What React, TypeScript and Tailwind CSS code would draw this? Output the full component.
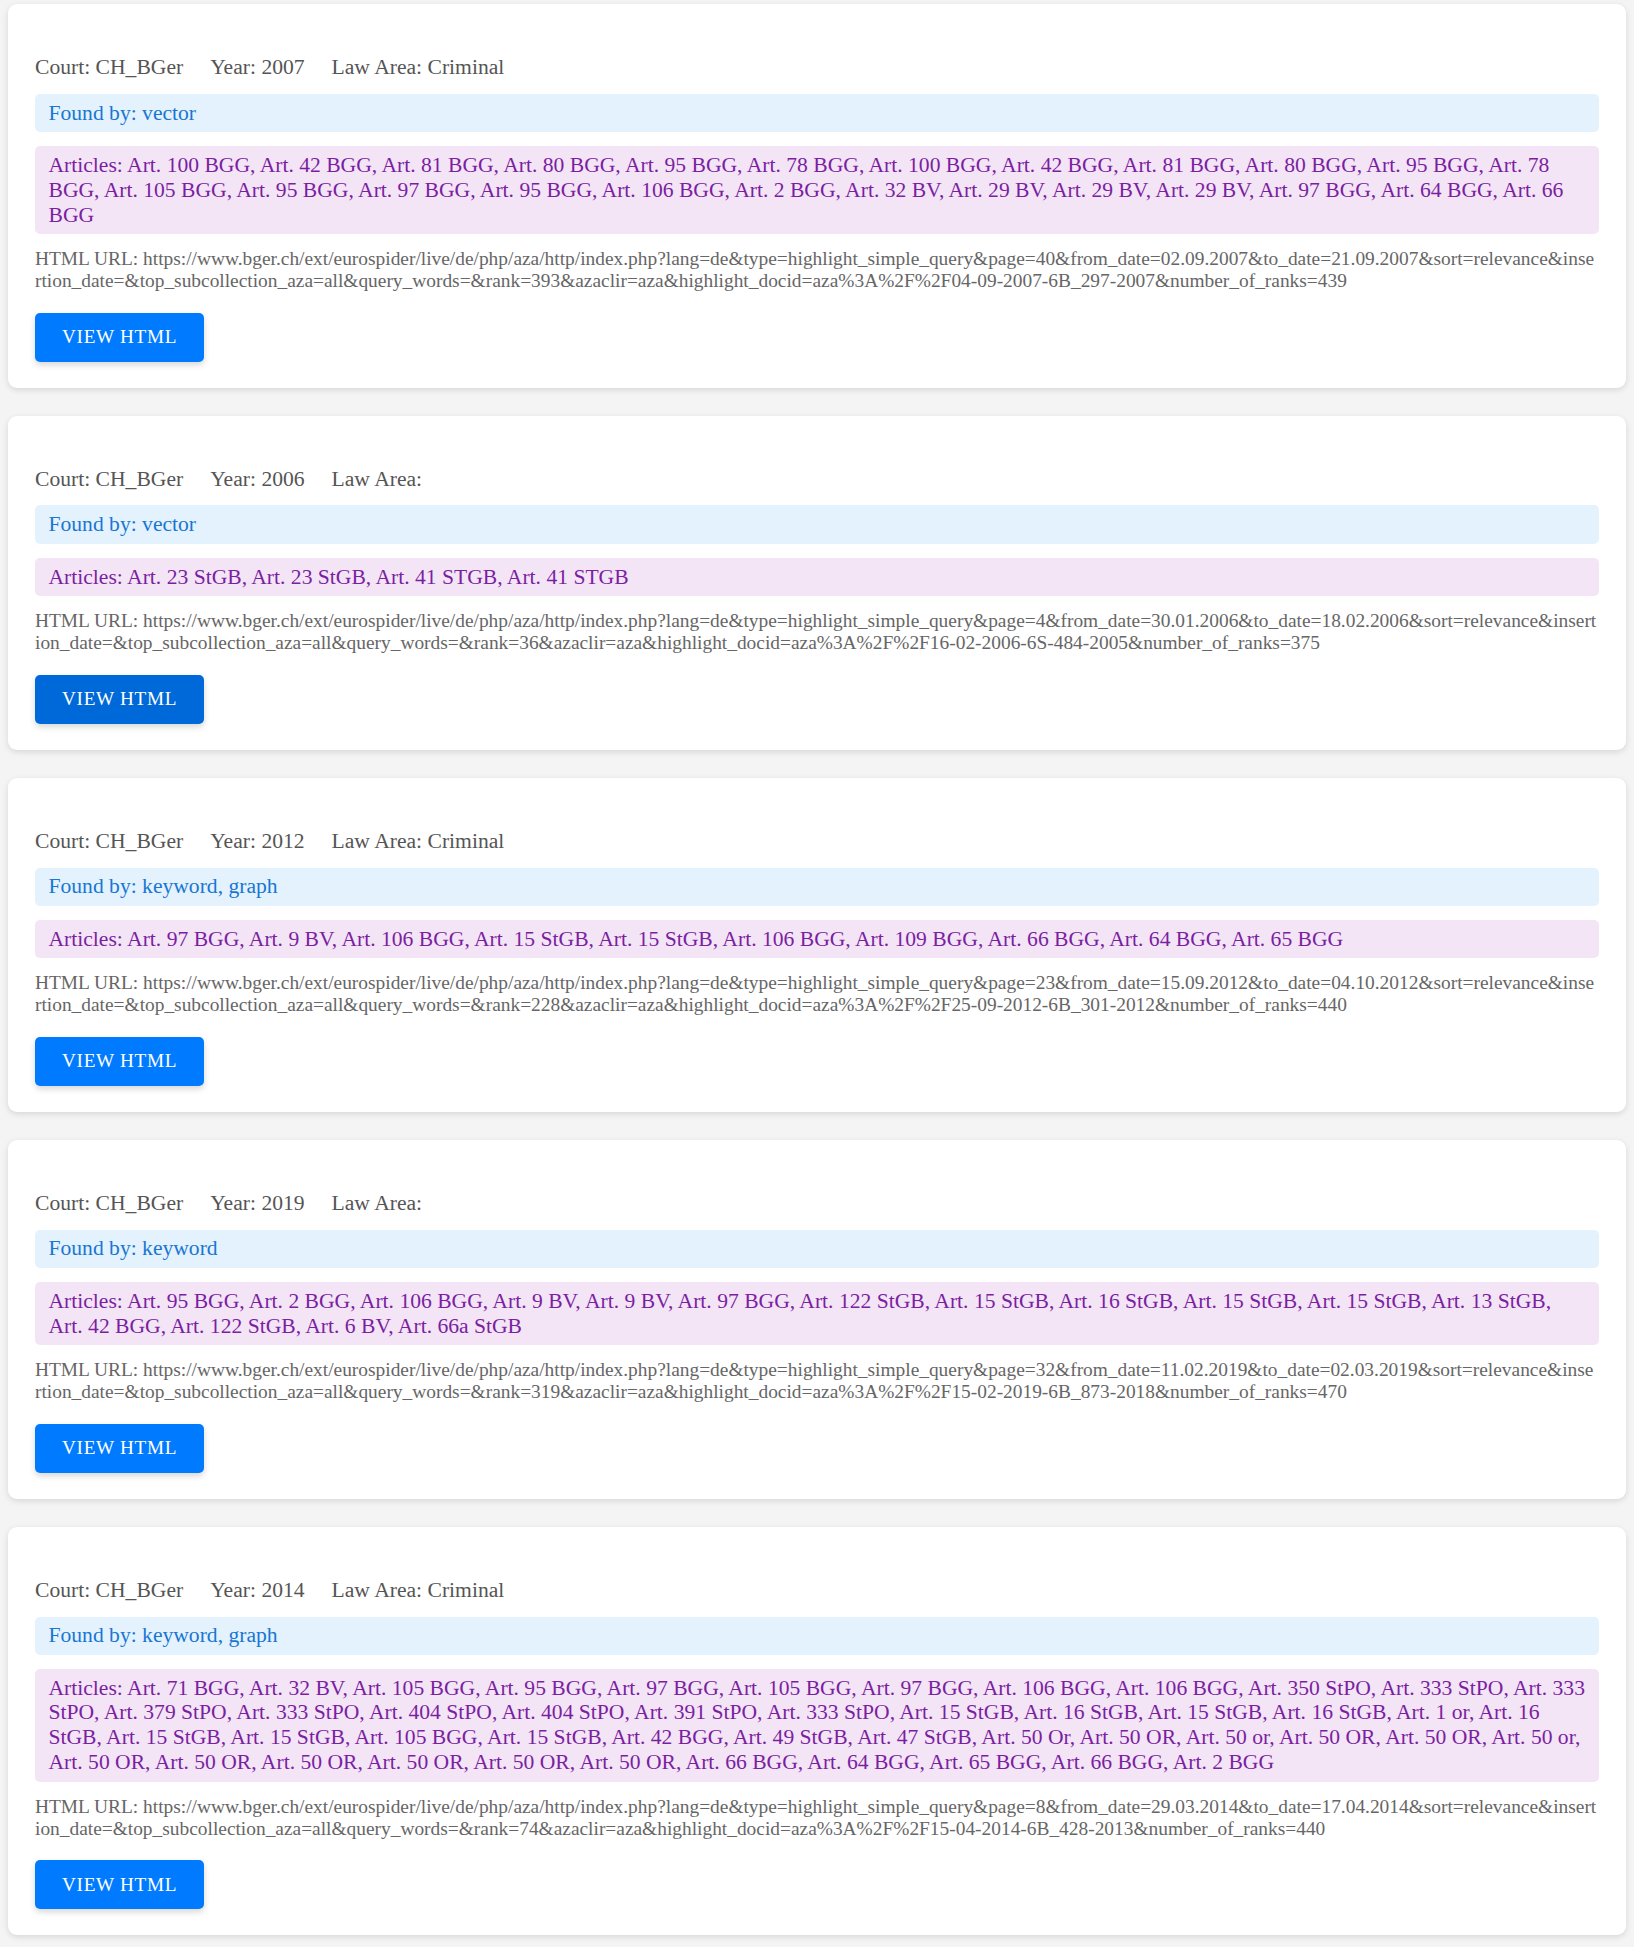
const base =
  'https://www.bger.ch/ext/eurospider/live/de/php/aza/http/index.php?lang=de&type=highlight_simple_query'

interface Decision {
  court: string
  year: number
  lawArea: string
  foundBy: string
  articles: string
  url: string
}

const decisions: Decision[] = [
  {
    court: 'CH_BGer',
    year: 2007,
    lawArea: 'Criminal',
    foundBy: 'vector',
    articles:
      'Art. 100 BGG, Art. 42 BGG, Art. 81 BGG, Art. 80 BGG, Art. 95 BGG, Art. 78 BGG, Art. 100 BGG, Art. 42 BGG, Art. 81 BGG, Art. 80 BGG, Art. 95 BGG, Art. 78 BGG, Art. 105 BGG, Art. 95 BGG, Art. 97 BGG, Art. 95 BGG, Art. 106 BGG, Art. 2 BGG, Art. 32 BV, Art. 29 BV, Art. 29 BV, Art. 29 BV, Art. 97 BGG, Art. 64 BGG, Art. 66 BGG',
    url:
      base +
      '&page=40&from_date=02.09.2007&to_date=21.09.2007&sort=relevance&insertion_date=&top_subcollection_aza=all&query_words=&rank=393&azaclir=aza&highlight_docid=aza%3A%2F%2F04-09-2007-6B_297-2007&number_of_ranks=439',
  },
  {
    court: 'CH_BGer',
    year: 2006,
    lawArea: '',
    foundBy: 'vector',
    articles: 'Art. 23 StGB, Art. 23 StGB, Art. 41 STGB, Art. 41 STGB',
    url:
      base +
      '&page=4&from_date=30.01.2006&to_date=18.02.2006&sort=relevance&insertion_date=&top_subcollection_aza=all&query_words=&rank=36&azaclir=aza&highlight_docid=aza%3A%2F%2F16-02-2006-6S-484-2005&number_of_ranks=375',
  },
  {
    court: 'CH_BGer',
    year: 2012,
    lawArea: 'Criminal',
    foundBy: 'keyword, graph',
    articles:
      'Art. 97 BGG, Art. 9 BV, Art. 106 BGG, Art. 15 StGB, Art. 15 StGB, Art. 106 BGG, Art. 109 BGG, Art. 66 BGG, Art. 64 BGG, Art. 65 BGG',
    url:
      base +
      '&page=23&from_date=15.09.2012&to_date=04.10.2012&sort=relevance&insertion_date=&top_subcollection_aza=all&query_words=&rank=228&azaclir=aza&highlight_docid=aza%3A%2F%2F25-09-2012-6B_301-2012&number_of_ranks=440',
  },
  {
    court: 'CH_BGer',
    year: 2019,
    lawArea: '',
    foundBy: 'keyword',
    articles:
      'Art. 95 BGG, Art. 2 BGG, Art. 106 BGG, Art. 9 BV, Art. 9 BV, Art. 97 BGG, Art. 122 StGB, Art. 15 StGB, Art. 16 StGB, Art. 15 StGB, Art. 15 StGB, Art. 13 StGB, Art. 42 BGG, Art. 122 StGB, Art. 6 BV, Art. 66a StGB',
    url:
      base +
      '&page=32&from_date=11.02.2019&to_date=02.03.2019&sort=relevance&insertion_date=&top_subcollection_aza=all&query_words=&rank=319&azaclir=aza&highlight_docid=aza%3A%2F%2F15-02-2019-6B_873-2018&number_of_ranks=470',
  },
  {
    court: 'CH_BGer',
    year: 2014,
    lawArea: 'Criminal',
    foundBy: 'keyword, graph',
    articles:
      'Art. 71 BGG, Art. 32 BV, Art. 105 BGG, Art. 95 BGG, Art. 97 BGG, Art. 105 BGG, Art. 97 BGG, Art. 106 BGG, Art. 106 BGG, Art. 350 StPO, Art. 333 StPO, Art. 333 StPO, Art. 379 StPO, Art. 333 StPO, Art. 404 StPO, Art. 404 StPO, Art. 391 StPO, Art. 333 StPO, Art. 15 StGB, Art. 16 StGB, Art. 15 StGB, Art. 16 StGB, Art. 1 or, Art. 16 StGB, Art. 15 StGB, Art. 15 StGB, Art. 105 BGG, Art. 15 StGB, Art. 42 BGG, Art. 49 StGB, Art. 47 StGB, Art. 50 Or, Art. 50 OR, Art. 50 or, Art. 50 OR, Art. 50 OR, Art. 50 or, Art. 50 OR, Art. 50 OR, Art. 50 OR, Art. 50 OR, Art. 50 OR, Art. 50 OR, Art. 66 BGG, Art. 64 BGG, Art. 65 BGG, Art. 66 BGG, Art. 2 BGG',
    url:
      base +
      '&page=8&from_date=29.03.2014&to_date=17.04.2014&sort=relevance&insertion_date=&top_subcollection_aza=all&query_words=&rank=74&azaclir=aza&highlight_docid=aza%3A%2F%2F15-04-2014-6B_428-2013&number_of_ranks=440',
  },
]

function DecisionCard({ d, active }: { d: Decision; active: boolean }) {
  return (
    <div className="bg-white rounded-[9px] shadow-[0_2px_6px_rgba(0,0,0,0.12)] px-[27px] pt-[51px] pb-[26px] mb-[28px]">
      {/* Meta row */}
      <div className="flex gap-[27px] text-[21.6px] leading-[24.8px] text-[#555]">
        <span>Court: {d.court}</span>
        <span>Year: {d.year}</span>
        <span>Law Area: {d.lawArea}</span>
      </div>

      {/* Found by */}
      <div className="mt-[14px] bg-[#e3f2fd] text-[#1976d2] text-[21.6px] leading-[24.8px] rounded-[5px] px-[13.5px] py-[6.8px]">
        Found by: {d.foundBy}
      </div>

      {/* Articles */}
      <div className="mt-[14px] bg-[#f3e5f5] text-[#7b1fa2] text-[21.6px] leading-[24.8px] rounded-[5px] px-[13.5px] py-[6.8px]">
        Articles: {d.articles}
      </div>

      {/* URL */}
      <p className="mt-[14px] text-[19.4px] leading-[22px] text-[#666] break-all">
        HTML URL: {d.url}
      </p>

      <button
        className={`mt-[20.5px] text-white uppercase text-[19.2px] leading-[22px] tracking-[0.7px] rounded-[5px] px-[27px] py-[13.5px] shadow-[0_3px_6px_rgba(0,0,0,0.16)] ${
          active ? 'bg-[#0069d9]' : 'bg-[#007bff]'
        }`}
      >
        View HTML
      </button>
    </div>
  )
}

export default function App() {
  return (
    <div
      className="min-h-screen bg-[#f4f4f4] px-[8px] pt-[4px] pb-[1px]"
      style={{ fontFamily: '"Liberation Serif", "Times New Roman", serif' }}
    >
      {decisions.map((d, i) => (
        <DecisionCard key={i} d={d} active={i === 1} />
      ))}
    </div>
  )
}
